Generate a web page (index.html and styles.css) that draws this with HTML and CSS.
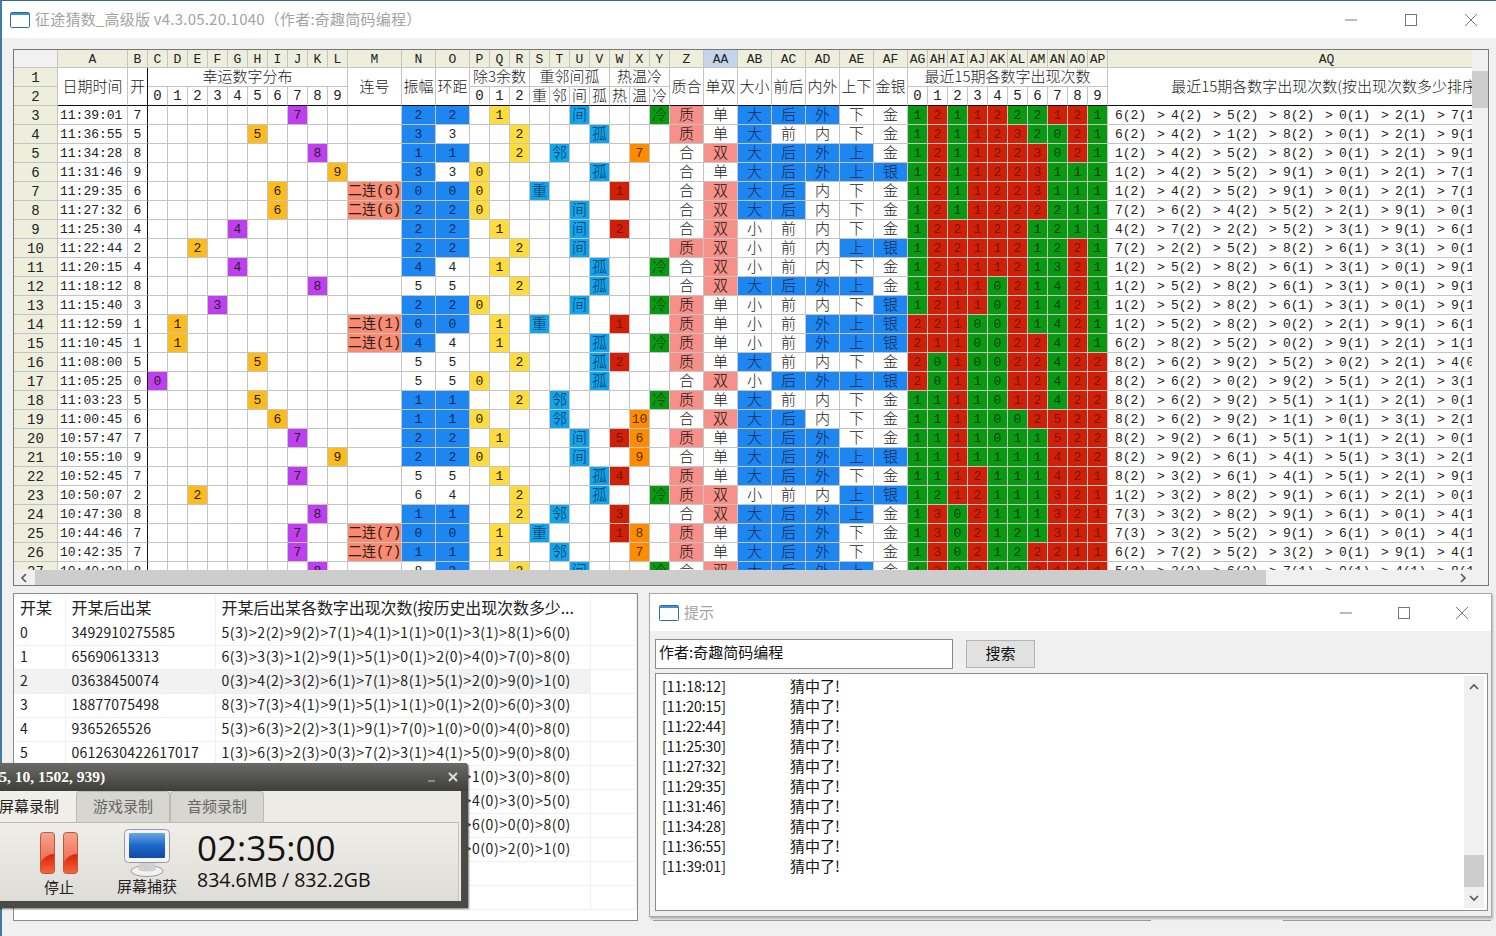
FILE: index.html
```html
<!DOCTYPE html>
<html lang="zh-CN">
<head>
  <meta charset="UTF-8" />
  <title>征途猜数_高级版</title>
  <link rel="stylesheet" href="styles.css">
</head>
<body>
  <div class="app">
    <header class="titlebar">
      <svg class="win-icon" viewBox="0 0 20 16"><rect x="0.5" y="0.5" width="19" height="15" rx="1" fill="#fff" stroke="#2c6aa6"/><rect x="1" y="1" width="18" height="2" fill="#3f8fd8"/></svg>
      <span class="titlebar-text">征途猜数_高级版 v4.3.05.20.1040（作者:奇趣简码编程）</span>
      <div class="caption">
        <svg viewBox="0 0 14 14"><path d="M1 7h12" stroke="#777" fill="none"/></svg>
        <svg viewBox="0 0 14 14"><rect x="1.5" y="1.5" width="11" height="11" stroke="#777" fill="none"/></svg>
        <svg viewBox="0 0 14 14"><path d="M1 1l12 12M13 1L1 13" stroke="#777" fill="none"/></svg>
      </div>
    </header>

    <div class="main">
      <div class="sheet">
        <div class="sheet-top">
          <div class="sheet-view"><table class="grid" id="grid"></table></div>
          <div class="vscroll"><div class="vthumb"></div></div>
        </div>
        <div class="hscroll">
          <svg class="arrow" viewBox="0 0 8 10"><path d="M6 1L2 5l4 4" stroke="#555" stroke-width="1.6" fill="none"/></svg>
          <div class="hthumb"></div>
          <svg class="arrow" viewBox="0 0 8 10"><path d="M2 1l4 4-4 4" stroke="#555" stroke-width="1.6" fill="none"/></svg>
        </div>
      </div>

      <div class="lower">
        <div class="stats">
          <table class="stats-table">
            <tr class="stats-head"><th>开某</th><th>开某后出某</th><th>开某后出某各数字出现次数(按历史出现次数多少...</th><th></th></tr>
            <tr><td>0</td><td>3492910275585</td><td>5(3)&gt;2(2)&gt;9(2)&gt;7(1)&gt;4(1)&gt;1(1)&gt;0(1)&gt;3(1)&gt;8(1)&gt;6(0)</td><td></td></tr>
            <tr><td>1</td><td>65690613313</td><td>6(3)&gt;3(3)&gt;1(2)&gt;9(1)&gt;5(1)&gt;0(1)&gt;2(0)&gt;4(0)&gt;7(0)&gt;8(0)</td><td></td></tr>
            <tr class="picked"><td>2</td><td>03638450074</td><td>0(3)&gt;4(2)&gt;3(2)&gt;6(1)&gt;7(1)&gt;8(1)&gt;5(1)&gt;2(0)&gt;9(0)&gt;1(0)</td><td></td></tr>
            <tr><td>3</td><td>18877075498</td><td>8(3)&gt;7(3)&gt;4(1)&gt;9(1)&gt;5(1)&gt;1(1)&gt;0(1)&gt;2(0)&gt;6(0)&gt;3(0)</td><td></td></tr>
            <tr><td>4</td><td>9365265526</td><td>5(3)&gt;6(3)&gt;2(2)&gt;3(1)&gt;9(1)&gt;7(0)&gt;1(0)&gt;0(0)&gt;4(0)&gt;8(0)</td><td></td></tr>
            <tr><td>5</td><td>0612630422617017</td><td>1(3)&gt;6(3)&gt;2(3)&gt;0(3)&gt;7(2)&gt;3(1)&gt;4(1)&gt;5(0)&gt;9(0)&gt;8(0)</td><td></td></tr>
            <tr><td>6</td><td></td><td>6(3)&gt;5(2)&gt;9(2)&gt;4(1)&gt;7(1)&gt;2(1)&gt;0(1)&gt;1(0)&gt;3(0)&gt;8(0)</td><td></td></tr>
            <tr><td>7</td><td></td><td>7(3)&gt;8(2)&gt;6(2)&gt;2(1)&gt;9(1)&gt;1(1)&gt;0(1)&gt;4(0)&gt;3(0)&gt;5(0)</td><td></td></tr>
            <tr><td>8</td><td></td><td>7(3)&gt;3(2)&gt;2(2)&gt;9(1)&gt;1(1)&gt;5(1)&gt;4(1)&gt;6(0)&gt;0(0)&gt;8(0)</td><td></td></tr>
            <tr><td>9</td><td></td><td>4(3)&gt;8(2)&gt;7(2)&gt;9(1)&gt;6(1)&gt;5(1)&gt;3(1)&gt;0(0)&gt;2(0)&gt;1(0)</td><td></td></tr>
            <tr><td></td><td></td><td></td><td></td></tr>
            <tr><td></td><td></td><td></td><td></td></tr>
          </table>
        </div>

        <div class="dialog">
          <div class="dialog-title">
            <svg class="win-icon" viewBox="0 0 20 16"><rect x="0.5" y="0.5" width="19" height="15" rx="1" fill="#fff" stroke="#2c6aa6"/><rect x="1" y="1" width="18" height="2" fill="#3f8fd8"/></svg>
            <span class="dialog-name">提示</span>
            <div class="caption caption-small">
              <svg viewBox="0 0 14 14"><path d="M1 7h12" stroke="#777" fill="none"/></svg>
              <svg viewBox="0 0 14 14"><rect x="1.5" y="1.5" width="11" height="11" stroke="#777" fill="none"/></svg>
              <svg viewBox="0 0 14 14"><path d="M1 1l12 12M13 1L1 13" stroke="#777" fill="none"/></svg>
            </div>
          </div>
          <div class="search-row">
            <div class="search-input">作者:奇趣简码编程</div>
            <button class="search-btn">搜索</button>
          </div>
          <div class="log">
            <ul class="log-list">
              <li><span>[11:18:12]</span>猜中了!</li>
              <li><span>[11:20:15]</span>猜中了!</li>
              <li><span>[11:22:44]</span>猜中了!</li>
              <li><span>[11:25:30]</span>猜中了!</li>
              <li><span>[11:27:32]</span>猜中了!</li>
              <li><span>[11:29:35]</span>猜中了!</li>
              <li><span>[11:31:46]</span>猜中了!</li>
              <li><span>[11:34:28]</span>猜中了!</li>
              <li><span>[11:36:55]</span>猜中了!</li>
              <li><span>[11:39:01]</span>猜中了!</li>
            </ul>
            <div class="log-scroll">
              <svg class="arrow" viewBox="0 0 10 8"><path d="M1 6l4-4 4 4" stroke="#555" stroke-width="1.6" fill="none"/></svg>
              <div class="log-thumb"></div>
              <svg class="arrow" viewBox="0 0 10 8"><path d="M1 2l4 4 4-4" stroke="#555" stroke-width="1.6" fill="none"/></svg>
            </div>
          </div>
        </div>
      </div>
    </div>
  </div>

  <!-- floating recorder window, hangs off the left edge of the screen -->
  <div class="recorder">
    <div class="rec-bar">
      <span class="rec-title">(-5, 10, 1502, 939)</span>
      <span class="rec-min"></span>
      <svg class="rec-close" viewBox="0 0 10 10"><path d="M1 1l8 8M9 1L1 9" stroke="#ddd" stroke-width="2" fill="none"/></svg>
    </div>
    <div class="rec-body">
      <div class="rec-tabs">
        <div class="rec-tab active">屏幕录制</div>
        <div class="rec-tab">游戏录制</div>
        <div class="rec-tab">音频录制</div>
      </div>
      <div class="rec-panel">
        <div class="rec-action">
          <svg class="pause-icon" viewBox="0 0 38 42">
            <defs>
              <linearGradient id="barTop" x1="0" y1="0" x2="0" y2="1">
                <stop offset="0" stop-color="#f7a48e"/><stop offset="0.6" stop-color="#f0765a"/><stop offset="1" stop-color="#ee6a48"/>
              </linearGradient>
              <linearGradient id="barLow" x1="0" y1="0" x2="0" y2="1">
                <stop offset="0" stop-color="#d82404"/><stop offset="1" stop-color="#f4633a"/>
              </linearGradient>
            </defs>
            <rect x="0.5" y="0.5" width="14" height="41" rx="3" fill="url(#barTop)" stroke="#b7583f"/>
            <path d="M1 30Q6 22 14 22V38Q14 41 11 41H4Q1 41 1 38Z" fill="url(#barLow)"/>
            <rect x="23.5" y="0.5" width="14" height="41" rx="3" fill="url(#barTop)" stroke="#b7583f"/>
            <path d="M24 30Q29 22 37 22V38Q37 41 34 41H27Q24 41 24 38Z" fill="url(#barLow)"/>
          </svg>
          <span>停止</span>
        </div>
        <div class="rec-action">
          <svg class="screen-icon" viewBox="0 0 46 48">
            <defs>
              <linearGradient id="screenBlue" x1="0" y1="0" x2="0" y2="1">
                <stop offset="0" stop-color="#6aa6e6"/><stop offset="0.5" stop-color="#1c68c8"/><stop offset="1" stop-color="#0e4da8"/>
              </linearGradient>
            </defs>
            <ellipse cx="23" cy="42" rx="16" ry="5.5" fill="#f2f2f2" stroke="#999"/>
            <path d="M16 32h14l2 9q-9 3-18 0z" fill="#d0d0d0"/>
            <rect x="0.5" y="0.5" width="45" height="33" rx="4" fill="#f4f4f4" stroke="#999"/>
            <rect x="5" y="4" width="36" height="25" rx="1" fill="url(#screenBlue)"/>
          </svg>
          <span>屏幕捕获</span>
        </div>
        <div class="rec-info">
          <div class="rec-time">02:35:00</div>
          <div class="rec-size">834.6MB / 832.2GB</div>
        </div>
      </div>
    </div>
  </div>

  <script src="script.js"></script>
</body>
</html>
```

FILE: styles.css
```css
* { box-sizing: border-box; }
html, body {
  margin: 0;
  padding: 0;
  height: 936px;
  overflow: hidden;
}
body {
  font-family: "Noto Sans CJK SC", "Noto Sans", sans-serif;
  background: #f0f0f0;
  color: #222;
  position: relative;
}
.app {
  border-left: 2px solid #3d7fa3;
  border-top: 1px solid #2f6a8a;
  height: 936px;
}

/* title bar */
.titlebar {
  display: flex;
  align-items: center;
  height: 37px;
  background: #fff;
  padding-left: 8px;
}
.win-icon { width: 20px; height: 16px; flex: none; }
.titlebar-text {
  margin: -2px 0 0 5px;
  font-size: 15px;
  letter-spacing: 0.22px;
  color: #a3a3a3;
}
.caption {
  margin-left: auto;
  display: flex;
  gap: 46px;
  padding-right: 18px;
}
.caption svg { width: 14px; height: 14px; }
.caption-small { gap: 44px; padding-right: 22px; }

/* main sheet */
.main { padding: 11px 3px 0 11px; }
.sheet {
  width: 1476px;
  height: 537px;
  border: 1px solid #777;
  background: #f0f0f0;
}
.sheet-top { display: flex; height: 520px; }
.sheet-view {
  width: 1458px;
  height: 520px;
  overflow: hidden;
  background: #fff;
}
.vscroll { width: 16px; padding-top: 21px; }
.vthumb { height: 37px; background: #cdcdcd; }
.hscroll {
  display: flex;
  align-items: center;
  height: 15px;
  padding: 0 21px 0 6px;
}
.hscroll .arrow { width: 8px; height: 10px; flex: none; }
.hthumb {
  width: 1231px;
  height: 15px;
  margin-left: 7px;
  margin-right: auto;
  background: #cdcdcd;
}

.grid {
  border-collapse: separate;
  border-spacing: 0;
  table-layout: fixed;
  width: 1532px;
  font-family: "Liberation Mono", "Noto Sans CJK SC", monospace;
  font-size: 13px;
  line-height: 18px;
  color: #222;
}
.grid th, .grid td {
  height: 19px;
  padding: 0;
  font-weight: normal;
  text-align: center;
  white-space: nowrap;
  border-right: 1px solid #c4c4c4;
  border-bottom: 1px solid #c4c4c4;
  background-clip: padding-box;
}
.c-row { width: 44px; }
.c-time { width: 70px; }
.c-n { width: 20px; }
.c-m { width: 54px; }
.c-w { width: 34px; }
.c-aq { width: 438px; }

.grid .letter {
  height: 18px;
  background: #eeeedd;
  font-size: 13px;
  line-height: 14px;
  padding-top: 3px;
}
.grid .letter.corner { background: #f2f2f2; }
.grid .letter.current { background: #c4d4ea; }
.grid .rownum { background: #eeeedd; font-size: 14px; line-height: 15px; padding-top: 3px; }
.grid .body-row td { line-height: 17px; padding-top: 1px; }
.grid .cn,
.grid .body-row td.cn {
  font-family: "Noto Sans CJK SC", sans-serif;
  font-size: 15px;
  font-weight: 300;
  line-height: 16px;
  padding: 0 0 2px;
}
.grid .tiny { font-size: 14px; }
.grid .frozen { border-right: 1px solid #111; }
.grid .rule { border-bottom: 1px solid #111; }
.grid .body-row .time { text-align: left; padding-left: 2px; }
.grid .body-row .aq {
  text-align: left;
  padding-left: 7px;
}
.aq-n { display: inline-block; width: 42px; }
.aq-gt { display: inline-block; width: 14px; }

.grid td.lucky-a { background-color: #febb1c; }
.grid td.lucky-b { background-color: #bf3fee; }
.grid .body-row td.pair { background-color: #fa8a70; font-size: 14px; line-height: 16px; padding: 1px 0; }
.grid td.blue { background-color: #1e86f0; color: #0a2a58; }
.grid td.sky { background-color: #12a5ee; color: #08304f; }
.grid td.yellow { background-color: #fedc3e; }
.grid td.red { background-color: #d02008; color: #74140a; }
.grid td.green { background-color: #0a9a12; color: #063f10; }
.grid td.warm { background-color: #ff8c00; color: #5a3000; }
.grid td.pink { background-color: #f69088; color: #111; }

/* lower left list */
.lower {
  display: flex;
  align-items: flex-start;
  margin-top: 7px;
}
.stats {
  width: 625px;
  height: 328px;
  border: 1px solid #8c8c8c;
  background: #fff;
  overflow: hidden;
  padding: 0;
}
.stats-table {
  border-collapse: collapse;
  table-layout: fixed;
  width: 623px;
  font-size: 14px;
}
.stats-table th, .stats-table td {
  height: 24px;
  padding: 0 0 0 6px;
  text-align: left;
  font-weight: normal;
  white-space: nowrap;
  border-right: 1px solid #f0f0f0;
  border-bottom: 1px solid #f0f0f0;
}
.stats-table th:nth-child(1) { width: 51px; }
.stats-table th:nth-child(2) { width: 150px; }
.stats-table th:nth-child(3) { width: 375px; letter-spacing: -0.1px; }
.stats-table td:nth-child(2) { letter-spacing: 0.2px; }
.stats-table td:nth-child(3) { letter-spacing: 0.6px; }
.stats-table td { padding-bottom: 2px; }
.stats-head th { height: 27px; font-size: 16px; border-bottom: 0; padding-bottom: 2px; }
.picked td:nth-child(-n+3) { background: #f2f2f2; }

/* dialog */
.dialog {
  position: relative;
  width: 843px;
  height: 324px;
  margin-left: 11px;
  background: #f0f0f0;
  border: 1px solid #a8a8a8;
  box-shadow: 1px 2px 2px rgba(0, 0, 0, 0.25);
  padding: 0 5px 0 5px;
}
/* edges of the windows stacked behind the dialog */
.dialog::before, .dialog::after {
  content: "";
  position: absolute;
  bottom: -5px;
  height: 3px;
  border-bottom: 1px solid #999;
}
.dialog::before { left: 3px; width: 498px; }
.dialog::after { left: 633px; width: 208px; }
.dialog-title {
  display: flex;
  align-items: center;
  height: 37px;
  margin: 0 -5px;
  padding-left: 9px;
  background: #fff;
}
.dialog-name {
  margin: -3px 0 0 5px;
  font-size: 15px;
  color: #a3a3a3;
}
.search-row {
  display: flex;
  margin-top: 8px;
  height: 30px;
}
.search-input {
  width: 298px;
  height: 30px;
  border: 1px solid #8c8c8c;
  background: #fff;
  font-size: 15px;
  line-height: 24px;
  padding-left: 3px;
  color: #111;
}
.search-btn {
  width: 69px;
  height: 28px;
  margin: 1px 0 0 13px;
  border: 1px solid #b4b4b4;
  background: #e1e1e1;
  font: 15px/22px "Noto Sans CJK SC", sans-serif;
  color: #111;
  padding: 0 0 2px;
}
.log {
  display: flex;
  width: 833px;
  height: 238px;
  margin-top: 4px;
  background: #fff;
  border: 1px solid #8c8c8c;
  padding: 2px 3px 2px 0;
}
.log-list {
  list-style: none;
  flex: 1;
  margin: 0;
  padding: 0 0 0 6px;
  font-size: 15px;
  line-height: 20px;
  color: #111;
}
.log-list span { display: inline-block; width: 128px; font-size: 14px; }
.log-scroll {
  display: flex;
  flex-direction: column;
  align-items: center;
  width: 20px;
  background: #f0f0f0;
}
.log-scroll .arrow { width: 10px; height: 8px; flex: none; margin: 7px 0; }
.log-thumb {
  width: 20px;
  height: 32px;
  margin-top: auto;
  background: #cdcdcd;
}
.log-scroll .arrow:last-child { margin-bottom: 6px; }
.log-scroll .arrow:first-child { margin-top: 7px; }

/* recorder, floats over everything */
.recorder {
  position: absolute;
  left: -32px;
  top: 763px;
  width: 500px;
  height: 145px;
  background: #4a4a46;
  border-radius: 4px 4px 0 0;
  box-shadow: 1px 1px 2px rgba(0, 0, 0, 0.5);
}
.rec-bar {
  display: flex;
  align-items: center;
  height: 28px;
  background: linear-gradient(#6a6a66, #3e3e3a);
  border-radius: 4px 4px 0 0;
  padding-right: 10px;
}
.rec-title {
  margin-left: 21px;
  font: bold 15.5px "Liberation Serif", serif;
  color: #fff;
}
.rec-min {
  width: 7px;
  height: 2px;
  margin: 8px 0 0 auto;
  background: #8a8a86;
}
.rec-close { width: 10px; height: 10px; margin-left: 13px; }
.rec-body {
  height: 110px;
  margin-right: 7px;
  background: #eceae4;
}
.rec-tabs {
  display: flex;
  height: 31px;
  padding-left: 14px;
  font-size: 15px;
}
.rec-tab {
  width: 94px;
  text-align: center;
  line-height: 28px;
  color: #666;
  background: #d8d6d0;
  border: 1px solid #bcbab4;
  border-bottom: 0;
  border-radius: 4px 4px 0 0;
}
.rec-tab.active {
  color: #222;
  background: #f0eee8;
  border-color: #f0eee8;
}
.rec-panel {
  display: flex;
  align-items: flex-start;
  height: 79px;
  margin-right: 2px;
  padding-left: 47px;
  border-top: 1px solid #bcbab4;
  border-right: 1px solid #c4c2bc;
  background: linear-gradient(#f0eee8, #dedcd6);
}
.rec-action {
  width: 88px;
  display: flex;
  flex-direction: column;
  align-items: center;
  font-size: 15px;
  line-height: 18px;
  padding-top: 8px;
  color: #222;
}
.pause-icon { width: 38px; height: 42px; margin: 1px 0 4px; }
.screen-icon { width: 46px; height: 48px; margin-bottom: 0; margin-top: -2px; }
.rec-info { margin-left: 6px; color: #111; font-family: "Open Sans", sans-serif; }
.rec-time { font-size: 35px; line-height: 44px; margin-top: 3px; }
.rec-size { font-size: 19.5px; line-height: 24px; margin-top: -2px; }
```

FILE: script.js
```js
// time|digit|amplitude|ring|kind|hot|warm|cold|counts|count colours|recent order
const ROWS = [
  "11:39:01|7|2|2|间|||1|1211222121|GRGRRGGRRG|6(2) 4(2) 5(2) 8(2) 0(1) 2(1) 7(1)",
  "11:36:55|5|3|3|孤|||0|1211232021|GRGRRRGGRG|6(2) 4(2) 1(2) 8(2) 0(1) 2(1) 9(1)",
  "11:34:28|8|1|1|邻||7|0|1211223021|GRGRRRRGRG|1(2) 4(2) 5(2) 8(2) 0(1) 2(1) 9(1)",
  "11:31:46|9|3|3|孤|||0|1211223111|GRGRRRRGGG|1(2) 4(2) 5(2) 9(1) 0(1) 2(1) 7(1)",
  "11:29:35|6|0|0|重|1||0|1211223111|GRGRRRRGGG|1(2) 4(2) 5(2) 9(1) 0(1) 2(1) 7(1)",
  "11:27:32|6|2|2|间|||0|1211222211|GRGRRRRGGG|7(2) 6(2) 4(2) 5(2) 2(1) 9(1) 0(1)",
  "11:25:30|4|2|2|间|2||0|1221221211|GRRRRRGGGG|4(2) 7(2) 2(2) 5(2) 3(1) 9(1) 6(1)",
  "11:22:44|2|2|2|间|||0|1221121221|GRRRRRGGRG|7(2) 2(2) 5(2) 8(2) 6(1) 3(1) 0(1)",
  "11:20:15|4|4|4|孤|||1|1211121321|GRRRRRGGRG|1(2) 5(2) 8(2) 6(1) 3(1) 0(1) 9(1)",
  "11:18:12|8|5|5|孤|||0|1211021421|GRRRGRGGRG|1(2) 5(2) 8(2) 6(1) 3(1) 0(1) 9(1)",
  "11:15:40|3|2|2|间|||1|1211021421|GRRRGRGGRG|1(2) 5(2) 8(2) 6(1) 3(1) 0(1) 9(1)",
  "11:12:59|1|0|0|重|1||0|2210021421|RRRGGRGGRG|1(2) 5(2) 8(2) 0(2) 2(1) 9(1) 6(1)",
  "11:10:45|1|4|4|孤|||1|2110022421|RRRGGRRGRG|6(2) 8(2) 5(2) 0(2) 9(1) 2(1) 1(1)",
  "11:08:00|5|5|5|孤|2||0|2010022422|RGRGGRRGRR|8(2) 6(2) 9(2) 5(2) 0(2) 2(1) 4(0)",
  "11:05:25|0|5|5|孤|||0|2011012422|RGRGGRRGRR|8(2) 6(2) 0(2) 9(2) 5(1) 2(1) 3(1)",
  "11:03:23|5|1|1|邻|||1|1111012422|GGRGGRRGRR|8(2) 6(2) 9(2) 5(1) 1(1) 2(1) 0(1)",
  "11:00:45|6|1|1|邻||10|0|1111002522|GGRGGGRRRR|8(2) 6(2) 9(2) 1(1) 0(1) 3(1) 2(1)",
  "10:57:47|7|2|2|间|5|6|0|1111011522|GGRGGGGRRR|8(2) 9(2) 6(1) 5(1) 1(1) 2(1) 0(1)",
  "10:55:10|9|2|2|间||9|0|1111111422|GGRGGGGRRR|8(2) 9(2) 6(1) 4(1) 5(1) 3(1) 2(1)",
  "10:52:45|7|5|5|孤|4||0|1112111421|GGRRGGGRRR|8(2) 3(2) 6(1) 4(1) 5(1) 2(1) 9(1)",
  "10:50:07|2|6|4|孤|||1|1212111321|GGRRGGGRRR|1(2) 3(2) 8(2) 9(1) 6(1) 2(1) 0(1)",
  "10:47:30|8|1|1|邻|3||0|1302111321|GRGRGGGRRR|7(3) 3(2) 8(2) 9(1) 6(1) 0(1) 4(1)",
  "10:44:46|7|0|0|重|1|8|0|1302121311|GRGRGGGRRR|7(3) 3(2) 5(2) 9(1) 6(1) 0(1) 4(1)",
  "10:42:35|7|1|1|邻||7|0|1302122211|GRGRGGRRRR|6(2) 7(2) 5(2) 3(2) 0(1) 9(1) 4(1)",
  "10:40:28|8|8|2|间|||1|1302122111|GRGRGGRRRR|5(2) 3(2) 6(2) 7(1) 0(1) 4(1) 8(1)",
].map(line => line.split("|"));

// every attribute column follows from the opening digit
const ATTRS = [
  { head: "质合", on: "12357", yes: "质", no: "合", fill: "pink", invert: false },
  { head: "单双", on: "13579", yes: "单", no: "双", fill: "pink", invert: true },
  { head: "大小", on: "56789", yes: "大", no: "小", fill: "blue", invert: false },
  { head: "前后", on: "06789", yes: "后", no: "前", fill: "blue", invert: false },
  { head: "内外", on: "01789", yes: "外", no: "内", fill: "blue", invert: false },
  { head: "上下", on: "01289", yes: "上", no: "下", fill: "blue", invert: false },
  { head: "金银", on: "01239", yes: "银", no: "金", fill: "blue", invert: false },
];

const LETTERS = "ABCDEFGHIJKLMNOPQRSTUVWXYZ".split("")
  .concat("ABCDEFGHIJKLMNOPQ".split("").map(c => "A" + c));

function td(text, cls) {
  return `<td class="${cls || ""}">${text === undefined ? "" : text}</td>`;
}

function repeat(n, fn) {
  let out = "";
  for (let i = 0; i < n; i++) out += fn(i);
  return out;
}

function colgroup() {
  return "<colgroup>"
    + '<col class="c-row"><col class="c-time">'
    + repeat(11, () => '<col class="c-n">')
    + '<col class="c-m"><col class="c-w"><col class="c-w">'
    + repeat(10, () => '<col class="c-n">')
    + repeat(7, () => '<col class="c-w">')
    + repeat(10, () => '<col class="c-n">')
    + '<col class="c-aq"></colgroup>';
}

function headRows() {
  const letters = '<th class="letter corner"></th>'
    + LETTERS.map(l => `<th class="letter${l === "AA" ? " current" : ""}">${l}</th>`).join("");
  const tall = (text, extra) => `<td rowspan="2" class="cn rule ${extra || ""}">${text}</td>`;
  const digits = n => repeat(n, i => td(i, "rule tiny"));
  const chars = s => s.split("").map(c => td(c, "cn rule")).join("");
  return `<tr>${letters}</tr>`
    + '<tr><th class="rownum">1</th>'
    + tall("日期时间") + tall("开", "frozen")
    + '<td colspan="10" class="cn">幸运数字分布</td>'
    + tall("连号") + tall("振幅") + tall("环距")
    + '<td colspan="3" class="cn">除3余数</td>'
    + '<td colspan="4" class="cn">重邻间孤</td>'
    + '<td colspan="3" class="cn">热温冷</td>'
    + ATTRS.map(a => tall(a.head)).join("")
    + '<td colspan="10" class="cn">最近15期各数字出现次数</td>'
    + tall("最近15期各数字出现次数(按出现次数多少排序)")
    + "</tr>"
    + '<tr><th class="rownum">2</th>'
    + digits(10) + digits(3) + chars("重邻间孤") + chars("热温冷") + digits(10)
    + "</tr>";
}

function bodyRow(r, i) {
  const [time, d, amp, ring, kind, hot, warmth, cold, counts, colours, order] = r;
  const prev = ROWS[i - 1], next = ROWS[i + 1];
  const isPair = (prev && prev[1] === d) || (next && next[1] === d);
  let html = `<th class="rownum">${i + 3}</th>` + td(time, "time") + td(d, "frozen");

  html += repeat(10, n => String(n) === d
    ? td(d, "12569".includes(d) ? "lucky-a" : "lucky-b") : td());
  html += isPair ? td(`二连(${d})`, "pair") : td();
  html += td(amp, Number(amp) <= 4 ? "blue" : "");
  html += td(ring, Number(ring) <= 2 ? "blue" : "");
  html += repeat(3, n => n === Number(d) % 3 ? td(n, "yellow") : td());
  html += "重邻间孤".split("").map(k => k === kind ? td(k, "cn sky") : td()).join("");
  html += hot ? td(hot, "red") : td();
  html += warmth ? td(warmth, "warm") : td();
  html += cold === "1" ? td("冷", "cn green") : td();
  html += ATTRS.map(a => {
    const yes = a.on.includes(d);
    return td(yes ? a.yes : a.no, "cn " + (yes !== a.invert ? a.fill : ""));
  }).join("");
  html += counts.split("").map((c, k) => td(c, colours[k] === "G" ? "green" : "red")).join("");
  html += td(order.split(" ")
    .map(o => `<span class="aq-n">${o}</span><span class="aq-gt">&gt;</span>`).join(""), "aq");
  return `<tr class="body-row">${html}</tr>`;
}

document.getElementById("grid").innerHTML = colgroup() + headRows() + ROWS.map(bodyRow).join("");
```
